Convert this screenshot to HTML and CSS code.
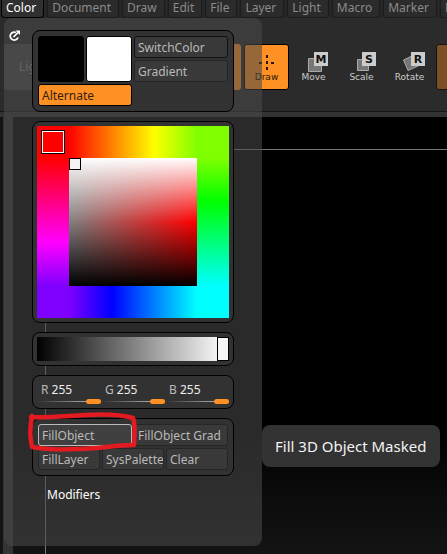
FILE: index.html
```html
<!DOCTYPE html>
<html lang="en">
<head>
<meta charset="utf-8">
<title>Color palette</title>
<link rel="stylesheet" href="styles.css">
</head>
<body>
<div class="app">
  <nav class="menubar">
    <button class="tab active">Color</button>
    <button class="tab">Document</button>
    <button class="tab">Draw</button>
    <button class="tab">Edit</button>
    <button class="tab">File</button>
    <button class="tab">Layer</button>
    <button class="tab">Light</button>
    <button class="tab">Macro</button>
    <button class="tab">Marker</button>
    <button class="tab">Material</button>
  </nav>
  <div class="toolbar">
    <button class="tool wide">LightBox</button>
    <button class="tool orange-dim" aria-label="Edit"></button>
    <button class="tool draw">
      <svg width="18" height="18" viewBox="0 0 18 18" stroke="#251609" stroke-width="2" fill="none"><path d="M9 1v4M9 7v4M9 13v4M1 9h4M13 9h4" stroke-dasharray="3 1"/></svg>
      Draw
    </button>
    <button class="tool mode">
      <svg width="22" height="20" viewBox="0 0 22 20"><path d="M1.500 6.500h13v13h-13z" fill="#777" stroke="#aaa"/><path d="M7 0h14v14H7z" fill="#ccc"/><text x="14" y="11" class="glyph">M</text></svg>
      Move
    </button>
    <button class="tool mode">
      <svg width="22" height="20" viewBox="0 0 22 20"><path d="M2.500 7.500h11v11h-11z" fill="#777" stroke="#aaa"/><path d="M7 0h14v14H7z" fill="#ccc"/><text x="14" y="11" class="glyph">S</text></svg>
      Scale
    </button>
    <button class="tool mode">
      <svg width="22" height="20" viewBox="0 0 22 20"><path d="M.500 8 10 3.500 15 14 5 18.500z" fill="#777" stroke="#aaa"/><path d="M8 0h14v14H8z" fill="#ccc"/><text x="15" y="11" class="glyph">R</text></svg>
      Rotate
    </button>
    <button class="tool brown" aria-label="Gizmo"></button>
  </div>
  <div class="workspace">
    <div class="rail"></div>
    <main class="canvas"><div class="document"></div></main>
  </div>

  <aside class="panel">
    <svg class="detach" width="12" height="12" viewBox="0 0 12 12" fill="none" stroke="#fff" stroke-width="1.700"><path d="M7 2.500A4 4 0 1 0 9 7.500"/><path d="M4.500 7 9 2.500"/><path d="M6.500.500H11V5z" fill="#fff" stroke="none"/></svg>
    <div class="stack">
      <section class="box swatches">
        <button class="swatch black" aria-label="Secondary color"></button>
        <button class="swatch white" aria-label="Main color"></button>
        <div class="pair">
          <button class="btn strong">SwitchColor</button>
          <button class="btn">Gradient</button>
        </div>
        <button class="btn alternate">Alternate</button>
      </section>
      <section class="box">
        <div class="picker">
          <div class="hue-top"><i class="hue-mark"></i></div>
          <div class="hue-left"></div>
          <div class="shade"><i class="shade-mark"></i></div>
          <div class="hue-right"></div>
          <div class="hue-bottom"></div>
        </div>
      </section>
      <section class="box">
        <input class="gray" type="range" min="0" max="255" value="255" aria-label="Intensity">
      </section>
      <section class="box channels">
        <label class="channel"><span>R <b>255</b></span><input type="range" min="0" max="255" value="255"></label>
        <label class="channel"><span>G <b>255</b></span><input type="range" min="0" max="255" value="255"></label>
        <label class="channel"><span>B <b>255</b></span><input type="range" min="0" max="255" value="255"></label>
      </section>
      <section class="box fills">
        <button class="btn half hover">FillObject</button>
        <button class="btn half">FillObject Grad</button>
        <button class="btn third">FillLayer</button>
        <button class="btn third">SysPalette</button>
        <button class="btn third">Clear</button>
        <svg class="scribble" width="112" height="44" viewBox="0 0 112 44" fill="none" stroke="#e31b20" stroke-width="4.500" stroke-linecap="round" stroke-linejoin="round"><path d="M4 6C20 7 38 5 58 4C76 3 96 4 106 7C109 16 107 26 107 34C88 34 70 38 48 38C30 39 16 38 5 36C3 28 3 16 5 5"/></svg>
      </section>
      <button class="modifiers">Modifiers</button>
    </div>
  </aside>
  <div class="tooltip" role="tooltip">Fill 3D Object Masked</div>
</div>
</body>
</html>
```
FILE: styles.css
```css
* { box-sizing: border-box; }
body {
  margin: 0;
  background: #000;
  color: #bbb;
  font: 12px/16px "Noto Sans", "Open Sans", sans-serif;
}
button {
  margin: 0;
  padding: 0;
  border: 0;
  background: none;
  color: inherit;
  font: inherit;
  text-align: left;
  white-space: nowrap;
}
.app {
  position: relative;
  display: flex;
  flex-direction: column;
  min-height: 100vh;
  overflow: hidden;
}
.menubar {
  display: flex;
  gap: 3px;
  height: 18px;
  padding-left: 1px;
  background: #262626;
  overflow: hidden;
}
.tab {
  flex: none;
  padding: 0 7px 2px 4px;
  border: 1px solid #1c1c1c;
  border-top: 0;
  border-radius: 0 0 4px 4px;
  background: #2b2b2b;
  color: #8a8a8a;
}
.tab.active {
  border-color: #000;
  background: #303030;
  color: #fff;
}
.toolbar {
  display: flex;
  gap: 3px;
  height: 94px;
  padding: 26px 0 0 4px;
  border-bottom: 1px solid #161616;
  background: #2b2b2b;
  overflow: hidden;
}
.tool {
  flex: none;
  display: flex;
  flex-direction: column;
  align-items: center;
  justify-content: flex-end;
  gap: 0;
  width: 45px;
  height: 46px;
  padding-bottom: 8px;
  border-radius: 3px;
  color: #ccc;
  font: 9px/10px "DejaVu Sans", sans-serif;
}
.tool.wide {
  display: block;
  width: 189px;
  padding: 0 15px;
  background: #484848;
  color: #8c8c8c;
  font: 12px/44px "Noto Sans", sans-serif;
}
.tool.orange-dim { background: #ff9124; }
.tool.draw {
  border: 1px solid #000;
  padding-bottom: 7px;
  background: #ff9124;
  color: #251609;
}
.tool.mode { padding-right: 2px; }
.mode svg { margin-left: 8px; }
.tool.brown { border: 1px solid #151515; background: #7c5027; }
.glyph { font: bold 11px "DejaVu Sans", sans-serif; text-anchor: middle; fill: #111; }
.workspace {
  flex: 1;
  display: flex;
  padding-top: 5px;
  background: #333;
}
.rail {
  width: 13px;
  border-left: 3px solid #141414;
}
.canvas {
  flex: 1;
  display: flex;
  padding: 32px 0 0 32px;
  background: linear-gradient(#000 70%, #141414);
}
.document {
  flex: 1;
  border-top: 1px solid #777;
  border-left: 1px solid #777;
}
.panel {
  position: absolute;
  top: 18px;
  left: 4px;
  display: flex;
  gap: 11px;
  width: 258px;
  height: 528px;
  padding: 12px 0 0 5px;
  border-radius: 8px;
  background: rgba(72, 72, 72, 0.58);
}
.stack {
  display: flex;
  flex-direction: column;
  gap: 9px;
  width: 202px;
}
.box {
  padding: 4px;
  border: 1px solid #000;
  border-radius: 8px;
  background: #323232;
}
.btn {
  height: 22px;
  padding: 0 3px;
  border: 1px solid #262626;
  border-radius: 3px;
  background: #393939;
  color: #bababa;
  line-height: 19px;
}
.btn.strong { border-color: #111; }
.swatches {
  display: grid;
  grid-template-columns: 46px 46px 1fr;
  grid-template-rows: 46px 22px;
  gap: 2px;
  height: 82px;
  padding: 5px;
}
.swatch { border: 1px solid #000; border-radius: 3px; }
.black { background: #000; }
.white { background: #fff; }
.pair { display: grid; gap: 2px; }
.btn.alternate {
  grid-column: span 2;
  border-color: #000;
  background: #ff9124;
  color: #33200f;
}
.picker {
  display: grid;
  grid-template-columns: 32px 128px 32px;
  grid-template-rows: 32px 128px 32px;
}
.hue-top {
  grid-column: span 3;
  padding: 4px;
  background: linear-gradient(90deg, #f00 32px, #ff0 117px, #80ff00 160px);
}
.hue-bottom {
  grid-column: span 3;
  background: linear-gradient(90deg, #8000ff 32px, #00f 75px, #0ff 160px);
}
.hue-left { background: linear-gradient(#f00, #f0f 66%, #8000ff); }
.hue-right { background: linear-gradient(#80ff00, #0f0 34%, #0ff); }
.hue-mark {
  display: block;
  width: 24px;
  height: 24px;
  border: 1px solid #000;
  box-shadow: inset 0 0 0 1px #fff;
}
.shade {
  background: linear-gradient(#fff, transparent 50%), linear-gradient(transparent 50%, #000), linear-gradient(90deg, #808080, #f00);
}
.shade-mark {
  display: block;
  width: 12px;
  height: 12px;
  border: 1px solid #000;
  background: #f4f4f4;
}
input[type="range"] {
  appearance: none;
  display: block;
  width: 100%;
  margin: 0;
  background: none;
}
input.gray { height: 24px; background: linear-gradient(90deg, #000, #f4f4f4 94%); }
.gray::-webkit-slider-thumb {
  appearance: none;
  width: 12px;
  height: 24px;
  border: 1px solid #000;
  background: #f6f6f6;
}
.channels {
  display: grid;
  grid-template-columns: repeat(3, 1fr);
  height: 34px;
  padding: 6px 4px 4px;
}
.channel { display: block; }
.channel span { display: block; padding-left: 4px; height: 16px; }
.channel b { color: #eee; font-weight: 400; }
.channel input { height: 6px; background: linear-gradient(90deg, transparent, #ccc) center / 100% 1px no-repeat; }
.channel input::-webkit-slider-thumb {
  appearance: none;
  width: 15px;
  height: 5px;
  border-radius: 3px;
  background: #ff9124;
}
.fills {
  position: relative;
  display: grid;
  grid-template-columns: repeat(6, 1fr);
  gap: 2px;
  height: 58px;
  padding: 5px;
}
.half { grid-column: span 3; }
.third { grid-column: span 2; overflow: hidden; }
.btn.hover { border-color: #bbb; background: #404040; }
.scribble {
  position: absolute;
  top: -8px;
  left: -6px;
}
.modifiers { padding: 2px 0 0 15px; color: #fff; }
.tooltip {
  position: absolute;
  top: 425px;
  left: 262px;
  padding: 11px 14px 11px 13px;
  border-radius: 8px;
  background: #333;
  color: #f2f2f2;
  font-size: 15px;
  line-height: 20px;
}
```
